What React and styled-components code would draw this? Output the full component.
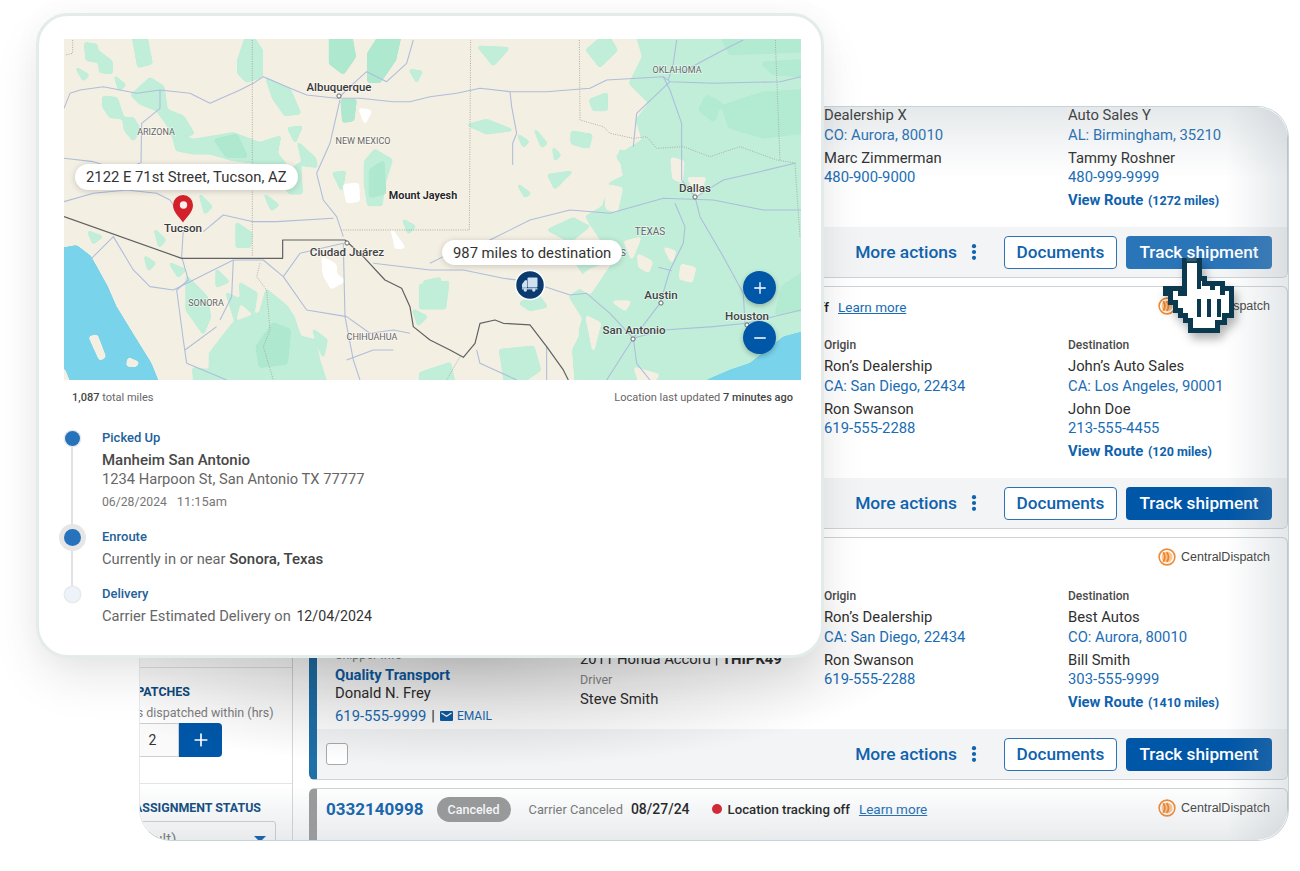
import React from 'react';
import styled, { createGlobalStyle } from 'styled-components';
import { Plus, Minus } from 'lucide-react';

const Global = createGlobalStyle`
  html, body { margin: 0; padding: 0; background: #fff; overflow: hidden; }
  * { box-sizing: border-box; }
  body { font-family: Roboto, "Liberation Sans", sans-serif; color: #2f2f2f; }
`;

const Stage = styled.div`
  position: relative;
  width: 1300px;
  height: 871px;
  padding: 106px 11px 30px 139px;
  overflow: hidden;
`;

const Panel = styled.section`
  position: relative;
  height: 100%;
  display: flex;
  border: 1px solid #c9d2d6;
  border-left-color: #e4e8ea;
  border-radius: 32px;
  overflow: hidden;
  background: #fff;
  &::after {
    content: '';
    position: absolute;
    inset: 0;
    pointer-events: none;
    border-radius: 32px;
    background:
      radial-gradient(ellipse 440px 110px at 330px 550px, rgba(0, 0, 0, 0.2), transparent 100%),
      linear-gradient(180deg, rgba(140, 155, 165, 0.22), transparent 70px),
      linear-gradient(0deg, rgba(140, 155, 165, 0.2), transparent 55px),
      linear-gradient(270deg, rgba(140, 155, 165, 0.24), transparent 60px);
  }
`;

const Sidebar = styled.aside`
  width: 153px;
  flex: none;
  padding-top: 560px;
  border-right: 1px solid #d4d7d9;
`;

const FilterSection = styled.div`
  height: ${(p) => p.$height}px;
  border-top: 1px solid #e2e4e6;
  padding: ${(p) => p.$pad}px 16px 0 0;
`;

const FilterTitle = styled.div`
  font-size: 12.4px;
  line-height: 16px;
  font-weight: 700;
  color: #0d4a80;
  white-space: nowrap;
  margin-left: ${(p) => p.$shift}px;
`;

const FilterHint = styled.div`
  font-size: 12.5px;
  line-height: 18px;
  color: #7f7f7f;
  white-space: nowrap;
  margin: 4px 0 1px -31px;
`;

const Stepper = styled.div`
  display: flex;
  height: 34px;
  margin-left: -14px;
`;

const StepValue = styled.div`
  width: 53px;
  border: 1px solid #cfcfcf;
  background: #fafafa;
  font-size: 14px;
  display: flex;
  align-items: center;
  justify-content: center;
  color: #333;
`;

const StepButton = styled.div`
  width: 43px;
  background: #0057a8;
  border-radius: 0 4px 4px 0;
  color: #fff;
  display: flex;
  align-items: center;
  justify-content: center;
`;

const FakeSelect = styled.div`
  height: 44px;
  margin: 5px 0 0 -23px;
  border: 1px solid #cfd2d4;
  border-radius: 3px;
  font-size: 15px;
  color: #777;
  padding: 8px 0 0 0;
  position: relative;
  white-space: nowrap;
  &::after {
    content: '';
    position: absolute;
    right: 9px;
    top: 14px;
    border-left: 6.5px solid transparent;
    border-right: 6.5px solid transparent;
    border-top: 6.5px solid #0057a8;
  }
`;

const CardColumn = styled.div`
  flex: 1;
  min-width: 0;
  margin: -72px 0 0 16px;
  display: flex;
  flex-direction: column;
  gap: 8px;
`;

const Card = styled.article`
  position: relative;
  height: 243px;
  flex: none;
  display: flex;
  flex-direction: column;
  background: #fff;
  border: 1px solid #cfd3d6;
  border-left: 8px solid ${(p) => p.$accent};
  border-radius: 6px;
`;

const CardHeader = styled.header`
  height: 43px;
  flex: none;
  display: flex;
  align-items: center;
  padding: 0 17px 3px 9px;
`;

const LoadId = styled.a`
  font-size: 17px;
  font-weight: 700;
  color: #0f62ae;
  margin-right: 13px;
`;

const StatusPill = styled.span`
  width: 74px;
  height: 25px;
  border-radius: 13px;
  background: #999;
  color: #fff;
  font-size: 12.5px;
  font-weight: 500;
  display: flex;
  align-items: center;
  justify-content: center;
  margin-right: 18px;
`;

const MetaLabel = styled.span`
  font-size: 12.8px;
  color: #777;
  margin-right: 8px;
`;

const MetaDate = styled.span`
  font-size: 14px;
  font-weight: 500;
  color: #1e1e1e;
  margin-right: 22px;
`;

const RedDot = styled.span`
  width: 10px;
  height: 10px;
  border-radius: 50%;
  background: #d9202c;
  margin-right: 6px;
`;

const TrackingNote = styled.span`
  font-size: 13.2px;
  font-weight: 500;
  color: #1e1e1e;
  white-space: nowrap;
  margin-right: 9px;
`;

const NoteSlot = styled.div`
  width: ${(p) => p.$width}px;
  display: flex;
  justify-content: flex-end;
`;

const LearnMore = styled.a`
  font-size: 13.5px;
  color: #1a6db5;
  text-decoration: underline;
  white-space: nowrap;
`;

const Brand = styled.div`
  margin: -2px 0 0 auto;
  display: flex;
  align-items: center;
  gap: 5px;
  font-family: "Liberation Sans", Arial, sans-serif;
  font-size: 12.5px;
  color: #444;
`;

const CardBody = styled.div`
  flex: 1;
  min-height: 0;
  display: grid;
  grid-template-columns: 245px 244px 244px 1fr;
  padding: 7px 0 0 18px;
`;

const Col = styled.div`
  padding-top: ${(p) => p.$top || 0}px;
  min-width: 0;
`;

const Caption = styled.div`
  font-size: 12px;
  line-height: 16px;
  font-weight: 500;
  color: #4a4a4a;
  margin-bottom: 3px;
`;

const MutedCaption = styled.div`
  font-size: 12.5px;
  line-height: 16px;
  color: #8a8a8a;
  margin: ${(p) => p.$gap || 0}px 0 ${(p) => p.$after || 0}px;
`;

const Line = styled.div`
  font-size: 14.8px;
  line-height: ${(p) => p.$lh || 20}px;
  color: #2f2f2f;
  white-space: nowrap;
`;

const LinkLine = styled(Line)`
  color: #1a6db5;
`;

const Contact = styled.div`
  margin-top: 4px;
`;

const Shipper = styled.div`
  font-size: 14.8px;
  line-height: 20px;
  font-weight: 700;
  color: #0f5ea8;
`;

const MailLink = styled.span`
  display: inline-flex;
  align-items: center;
  gap: 4px;
  font-size: 12px;
  color: #1a6db5;
  margin-left: 5px;
`;

const Pipe = styled.span`
  color: #333;
  margin-left: 5px;
`;

const Route = styled.div`
  font-size: 14.8px;
  line-height: 20px;
  font-weight: 700;
  color: #0f62ae;
  margin-top: 3px;
  white-space: nowrap;
  small {
    font-size: 12.5px;
    margin-left: 1px;
  }
`;

const CardFooter = styled.footer`
  height: 50px;
  flex: none;
  display: flex;
  align-items: center;
  padding: 0 15px 0 9px;
  background: #f3f4f5;
  border-radius: 0 0 5px 0;
`;

const Check = styled.span`
  width: 22px;
  height: 22px;
  border: 1.5px solid #a9a9a9;
  border-radius: 3px;
  background: #fff;
`;

const MoreActions = styled.a`
  margin-left: auto;
  display: flex;
  align-items: center;
  gap: 14px;
  font-size: 17.4px;
  font-weight: 500;
  color: #0f62ae;
  margin-right: 27px;
`;

const OutlineButton = styled.button`
  width: 113px;
  height: 33px;
  border: 1.5px solid #2c73b4;
  border-radius: 4px;
  background: #fff;
  color: #0f62ae;
  font: 500 17.2px Roboto, sans-serif;
  padding: 0;
  margin-right: 9px;
`;

const SolidButton = styled.button`
  width: 146px;
  height: 33px;
  border: 0;
  border-radius: 4px;
  background: ${(p) => (p.$hover ? '#2a74b8' : '#0057a8')};
  color: #fff;
  font: 500 17.2px Roboto, sans-serif;
  padding: 0;
`;

const FrontCard = styled.section`
  position: absolute;
  left: 36px;
  top: 13px;
  width: 788px;
  height: 645px;
  background: #fff;
  border: 3px solid #e4eceb;
  border-radius: 32px;
  padding: 23px 22px 0 25px;
  box-shadow: 0 22px 50px -4px rgba(0, 0, 0, 0.1), 0 0 30px rgba(0, 0, 0, 0.03);
`;

const MapBox = styled.div`
  position: relative;
  width: 737px;
  height: 341px;
  overflow: hidden;
  background: #f4efe3;
  svg.map {
    display: block;
  }
`;

const MapPill = styled.div`
  position: absolute;
  left: ${(p) => p.$x}px;
  top: ${(p) => p.$y}px;
  height: ${(p) => p.$h}px;
  padding: 0 11px;
  display: flex;
  align-items: center;
  background: #fff;
  border-radius: 14px;
  font-size: 14.8px;
  color: #333;
  white-space: nowrap;
  box-shadow: 0 1px 6px rgba(0, 0, 0, 0.18);
`;

const ZoomButton = styled.div`
  position: absolute;
  left: 679px;
  top: ${(p) => p.$y}px;
  width: 33px;
  height: 33px;
  border-radius: 50%;
  background: #0057a8;
  color: #fff;
  display: flex;
  align-items: center;
  justify-content: center;
  box-shadow: 0 2px 5px rgba(0, 0, 0, 0.25);
`;

const MapMeta = styled.div`
  display: flex;
  justify-content: space-between;
  padding: 11px 6px 0 8px;
  font-size: 11px;
  line-height: 14px;
  color: #666;
  b {
    font-weight: 500;
    color: #444;
  }
`;

const Timeline = styled.ol`
  list-style: none;
  margin: 25px 0 0 0;
  padding: 0;
  position: relative;
  &::before {
    content: '';
    position: absolute;
    left: 7px;
    top: 10px;
    bottom: 36px;
    width: 2px;
    background: #e0e2e3;
  }
`;

const Step = styled.li`
  position: relative;
  padding-left: 38px;
  height: ${(p) => p.$h}px;
`;

const StepDot = styled.span`
  position: absolute;
  left: ${(p) => (p.$big ? 0 : 1)}px;
  top: ${(p) => (p.$big ? 0 : 1)}px;
  width: ${(p) => (p.$big ? 17 : 15)}px;
  height: ${(p) => (p.$big ? 17 : 15)}px;
  border-radius: 50%;
  background: ${(p) => (p.$todo ? '#edf3f9' : '#2672bb')};
  box-shadow: 0 0 0 ${(p) => (p.$big ? 5 : 1.5)}px ${(p) => (p.$big ? '#e6e6e6' : '#e7e9ea')};
`;

const StepTitle = styled.div`
  font-size: 13px;
  line-height: 16px;
  font-weight: 500;
  color: #22619a;
  margin-bottom: ${(p) => p.$gap || 4}px;
`;

const Place = styled.div`
  font-size: 15px;
  line-height: 20px;
  font-weight: 500;
  color: #484848;
`;

const StepText = styled.div`
  font-size: 14.7px;
  line-height: 19px;
  color: #666;
  b {
    font-size: 15px;
    font-weight: 500;
    color: #444;
  }
  strong {
    font-size: 14.2px;
    font-weight: 400;
    color: #333;
    margin-left: 2px;
  }
`;

const StepTime = styled.div`
  font-size: 12.2px;
  line-height: 16px;
  color: #777;
  margin-top: 5px;
  span {
    margin-left: 10px;
    font-size: 12.8px;
  }
`;

const HandCursor = styled.svg`
  position: absolute;
  left: 1155px;
  top: 258px;
  filter: drop-shadow(3px 6px 5px rgba(0, 0, 0, 0.3));
`;

const greens5 = [
  '340,320 400,330 460,320 520,310 600,340 660,320 650,370 690,420 720,400 725,490 690,490 640,430 600,400 520,390 450,370 400,370 350,360',
  '215,195 270,145 310,170 320,240 370,260 400,310 345,330 320,280 290,240 240,220',
  '130,200 170,205 190,265 150,260 130,230',
  '190,265 220,265 240,300 220,330 195,300',
  '535,90 565,0 605,60 605,140 560,155 535,130',
  '215,0 255,0 275,100 235,110',
  '115,65 155,95 155,130 120,125',
  '75,40 110,45 115,95 80,90',
  '50,115 85,135 70,150',
  '620,145 690,180 720,250 675,255 640,205',
  '715,340 765,385 770,410 730,405',
  '685,295 725,290 705,335',
  '915,395 945,360 995,390 970,470 965,525 925,525 915,460',
  '450,970 520,880 600,850 620,780 680,830 700,860 720,920 760,930 780,1000 810,1090 450,1090',
  '380,740 440,800 450,860 430,910 380,840',
  '470,720 505,755 470,770',
  '530,580 575,610 570,650 530,650',
  '420,495 455,530 435,550',
  '540,760 590,790 580,850 545,820',
  '615,495 655,525 635,540',
  '1030,570 1065,590 1045,610',
  '500,790 540,810 525,870',
  '1060,840 1100,860 1075,885',
  '760,900 800,930 790,980',
  '820,430 855,425 845,480',
  '165,140 195,165 178,180',
  '330,700 375,720 355,740',
  '255,680 285,700 265,720',
  '285,600 315,630 298,650',
  '85,605 125,620 100,640',
  '400,1015 475,1025 475,1090 405,1090',
  '80,990 130,1000 100,1030',
  '1050,120 1085,125 1070,155',
  '1090,755 1140,745 1140,795',
];
const dark5 = [
  '810,0 870,0 885,80 850,130 810,100',
  '925,70 970,0 1025,0 1005,90 960,155 925,155',
  '845,210 887,210 880,270 850,275',
  '465,330 530,315 560,380 500,380',
  '930,420 970,395 975,490 930,500',
  '590,950 640,880 690,900 680,1000 600,1010',
];
const white5 = [
  '852,466 894,462 896,512 862,516',
  '900,238 932,243 915,278',
  '996,600 1032,652 1008,654',
  '788,684 826,704 828,734 852,752 815,774 792,735',
];
const water5 =
  '-30,660 50,646 92,678 142,768 168,828 223,918 273,998 310,1090 -30,1090';
const land5 = ['90,922 110,917 134,980 120,988', '206,986 234,998 226,1008 202,1006', '-30,1020 12,1020 40,1090 -30,1090'];

const greens6 = [
  '610,-20 1170,-20 1170,1090 440,1090 430,960 470,880 420,800 480,760 440,700 520,640 470,560 520,530 540,460 600,430 560,380 640,330 620,270 660,220 600,160 640,80',
  '145,50 235,55 190,105',
  '115,285 170,270 245,300 170,310',
  '265,315 295,335 280,350',
  '315,300 350,340 335,350',
  '425,305 485,315 475,355 425,340',
  '265,465 300,490 285,500',
  '355,435 425,425 375,475',
  '355,600 430,565 475,590 420,635',
  '-30,765 55,755 45,835 -30,835',
  '370,355 390,375 375,390',
  '470,60 530,10 560,60 510,110',
  '480,210 530,190 530,240 490,240',
  '480,800 530,810 560,860 600,880 600,1090 460,1090 450,900',
  '210,960 310,950 330,1020 230,1090',
  '-30,1030 60,1000 80,1090 -30,1090',
  '270,820 320,790 350,830 300,840',
  '570,360 610,400 580,430',
];
const beige6 = [
  '525,465 575,475 560,545 530,535',
  '725,385 760,395 755,455 730,445',
  '625,675 665,695 655,725 628,710',
  '705,655 735,665 725,695',
  '755,705 795,715 785,755 750,745',
  '550,815 600,815 585,840',
  '775,445 825,445 805,495',
  '430,760 480,720 540,700 480,790',
  '470,860 510,880 490,960',
  '425,375 475,355 455,400',
  '615,1015 685,1035 640,1090',
  '515,395 555,375 565,435',
  '585,635 630,625 605,685',
];
const dark6 = [
  '880,230 1000,190 1170,180 1170,300 1000,320 900,290',
  '1060,770 1170,700 1170,830 1040,850',
  '830,200 870,220 850,270 810,240',
  '1000,100 1170,90 1170,140 1030,130',
  '860,-20 1170,-20 1170,60 900,70',
];
const water6 = '830,1090 830,1050 900,1020 960,1000 1010,960 1060,920 1170,892 1170,1090';

const roads5 = [
  'M12,235 L30,190 L60,180 L130,170 L230,190 L300,180 L390,190 L450,220 L540,180 L580,160 L610,140 L680,170 L740,195 L830,205 L900,205 L1000,215 L1050,215 L1110,200',
  'M300,180 L300,235 L245,280 L243,400',
  'M12,515 L100,490 L200,480 L290,490 L330,510 L370,570',
  'M370,600 L365,680 L385,750 L350,780',
  'M430,605 L490,555 L580,575 L650,575 L820,565',
  'M12,385 L100,395 L180,420 L240,400',
  'M840,210 L810,340 L770,430 L790,510 L830,560 L850,620',
  'M1060,30 L1040,100 L980,155 L920,125 L870,170 L840,200',
  'M90,690 L160,620 L220,720 L270,770 L340,780 L400,750 L520,690 L610,690 L670,740 L720,670 L850,640',
  'M520,690 L515,800 L480,870',
  'M350,780 L370,930 L380,1000',
  'M375,960 L470,890',
  'M670,740 L740,840 L860,860 L930,910 L1000,900 L1050,910',
  'M850,640 L855,860 L880,990 L900,1050',
  'M380,1000 L500,1050',
  'M940,700 L1110,720',
  'M940,960 L1000,960 M860,990 L940,960',
];
const roads6 = [
  'M0,200 L80,190 L150,175 L240,185 L350,185 L480,175 L530,150 L700,140 L720,155 L850,160 L1050,155 L1113,140',
  'M240,185 L245,230 L260,310 L248,340 L248,405',
  'M700,140 L720,180 L755,280 L755,450 L795,500',
  'M720,155 L620,250 L610,350',
  'M940,30 L880,60 L750,130',
  'M740,30 L730,100 L715,150',
  'M0,720 L100,720 L220,745 L300,755 L420,795 L470,790 L540,850 L610,925 L700,900 L850,890 L950,880 L1113,840',
  'M180,630 L300,570 L420,540 L540,550 L700,505 L850,510 L1000,540 L1113,540',
  'M795,500 L810,560 L880,680 L940,790 L945,880',
  'M735,520 L765,590 L760,640 L720,720 L690,820 L610,925',
  'M610,925 L530,1050 M610,925 L620,1000 L660,1050',
  'M1095,400 L990,425 L880,450 L800,500',
  'M685,712 L725,722',
  'M0,700 L40,680 L180,630',
  'M140,960 L150,1000 L260,1050 M350,950 L350,1050',
];
const dotted5 = [
  'M577,30 L577,680',
  'M843,600 L1110,600',
  'M600,700 L590,740 L620,780 L630,900 L610,950 L640,1050',
  'M38,30 L38,70 L15,75',
];
const dotted6 = [
  'M0,600 L118,600 L122,30',
  'M448,30 L450,270 L520,290 L540,310 L610,325 L650,320 L680,355 L760,350 L840,380 L930,350 L1040,390 L1100,400',
  'M1036,30 L1050,390',
  'M1095,400 L1110,620',
  'M90,980 L50,1050',
];
const border5 = 'M12,560 L365,685 L668,685 L668,630 L855,630 L910,680 L975,750 L1025,775 L1050,830 L1060,890 L1110,930';
const border6 =
  'M0,930 L60,960 L100,982 L135,940 L150,880 L195,870 L220,880 L300,885 L350,950 L400,1020 L415,1050';

const labels = [
  ['Albuquerque', 339, 91, 11.4, 500, '#3a3a3a'],
  ['ARIZONA', 156, 134.5, 9, 400, '#666'],
  ['NEW MEXICO', 363, 143.5, 9, 400, '#666'],
  ['Mount Jayesh', 423, 198.5, 10.8, 600, '#222'],
  ['OKLAHOMA', 677, 72.5, 9, 400, '#666'],
  ['Dallas', 695, 192, 11.6, 500, '#444'],
  ['TEXAS', 650, 234.5, 10, 400, '#666'],
  ['Tucson', 183, 232, 11.6, 500, '#3a3a3a'],
  ['Ciudad Juárez', 347, 256, 11.6, 500, '#444'],
  ['SONORA', 206, 306, 9, 400, '#666'],
  ['CHIHUAHUA', 372, 339.5, 9, 400, '#666'],
  ['Austin', 661, 299, 11.6, 500, '#444'],
  ['San Antonio', 634, 334, 11.6, 500, '#444'],
  ['Houston', 747, 320, 11.6, 500, '#444'],
  ['S', 623, 255.5, 9.5, 400, '#666'],
];

const towns = [
  [339, 96],
  [695, 197],
  [661, 303],
  [633, 339],
  [347, 243],
  [747, 325],
];

function MapDrawing() {
  const poly = (list, fill, sw = 6) =>
    list.map((pts, i) => (
      <polygon key={i} points={pts} fill={fill} stroke={fill} strokeWidth={sw} strokeLinejoin="round" />
    ));
  const lines = (list, props) => list.map((d, i) => <path key={i} d={d} fill="none" strokeLinejoin="round" {...props} />);
  const road = { stroke: '#aebddb', strokeWidth: 3.2 };
  const dots = { stroke: '#a3a39c', strokeWidth: 2.6, strokeDasharray: '3 4' };
  const blob = 'url(#blob)';
  return (
    <svg className="map" width="737" height="341" viewBox="64 39 737 341">
      <defs>
        <filter
          id="blob"
          filterUnits="userSpaceOnUse"
          x="-120"
          y="-120"
          width="1500"
          height="1400"
          colorInterpolationFilters="sRGB"
        >
          <feGaussianBlur stdDeviation="5" />
          <feColorMatrix values="1 0 0 0 0 0 1 0 0 0 0 0 1 0 0 0 0 0 6 -2" />
        </filter>
      </defs>
      <rect x="64" y="39" width="737" height="341" fill="#f4efe3" />
      <g transform="translate(60 30) scale(.3333)">
        <g filter={blob}>{poly(greens5, '#c0eed9')}</g>
        <g filter={blob}>{poly(dark5, '#aee8cf')}</g>
        <g filter={blob}>{poly(white5, '#fff')}</g>
      </g>
      <g transform="translate(430 30) scale(.3333)">
        <g filter={blob}>{poly(greens6, '#c0eed9')}</g>
        <g filter={blob}>{poly(dark6, '#b3ead2', 10)}</g>
        <g filter={blob}>{poly(beige6, '#f4efe3')}</g>
      </g>
      <g transform="translate(60 30) scale(.3333)">
        <g filter={blob}><polygon points={water5} fill="#79d3ea" /></g>
        <g filter={blob}>{poly(land5, '#f4efe3')}</g>
        {lines(dotted5, dots)}
        {lines(roads5, road)}
        <path d={border5} fill="none" stroke="#5f6163" strokeWidth="3.6" strokeLinejoin="round" />
      </g>
      <g transform="translate(430 30) scale(.3333)">
        <g filter={blob}><polygon points={water6} fill="#79d3ea" /></g>
        {lines(dotted6, dots)}
        {lines(roads6, road)}
        <path d={border6} fill="none" stroke="#5f6163" strokeWidth="3.6" strokeLinejoin="round" />
      </g>
      {towns.map(([x, y]) => (
        <circle key={x} cx={x} cy={y} r="2.1" fill="#fff" stroke="#666" strokeWidth="1" />
      ))}
      {labels.map(([t, x, y, s, w, c]) => (
        <text
          key={t}
          x={x}
          y={y}
          textAnchor="middle"
          fontFamily="Roboto, sans-serif"
          fontSize={s}
          fontWeight={w}
          fill={c}
          stroke="rgba(255,255,255,.55)"
          strokeWidth="1.6"
          style={{ paintOrder: 'stroke' }}
        >
          {t}
        </text>
      ))}
      <path
        d="M183 222.5c-2-4-10-9.500-10-17.500a10 10 0 0 1 20 0c0 8-8 13.500-10 17.500z"
        fill="#d3202b"
      />
      <circle cx="183.500" cy="205" r="3.700" fill="#fbeeee" />
      <g transform="translate(530 285)">
        <circle r="14.500" fill="#0a3a6e" stroke="#fff" strokeWidth="1.500" />
        <rect x="-2.500" y="-7.500" width="10" height="10" rx="1" fill="#cfe0ef" />
        <path d="M-8 2.800v-3.500l3-4h2v7.500z" fill="#cfe0ef" />
        <rect x="-8" y="3.200" width="15.500" height="1.200" fill="#cfe0ef" />
        <circle cx="-4.700" cy="5" r="1.700" fill="#cfe0ef" />
        <circle cx="3.800" cy="5" r="1.700" fill="#cfe0ef" />
      </g>
    </svg>
  );
}

const LogoMark = () => (
  <svg width="18" height="18" viewBox="0 0 19 19">
    <circle cx="9.500" cy="9.500" r="8.300" fill="#fff" stroke="#f08a35" strokeWidth="1.700" />
    <circle cx="9.500" cy="9.500" r="5.800" fill="#fbc596" />
    <path d="M5.500 4.500Q9 9.500 5.500 14.500M9.200 4.500Q13 9.500 9.200 14.500" fill="none" stroke="#ee8428" strokeWidth="1.900" />
  </svg>
);

const KebabIcon = () => (
  <svg width="6" height="16" viewBox="0 0 6 16" fill="#0f62ae">
    <circle cx="3" cy="2.200" r="2.100" />
    <circle cx="3" cy="8" r="2.100" />
    <circle cx="3" cy="13.800" r="2.100" />
  </svg>
);

const MailIcon = () => (
  <svg width="13" height="10" viewBox="0 0 13 10">
    <rect width="13" height="10" rx="1" fill="#0f5ea8" />
    <path d="M1.500 2l5 3.200 5-3.200" fill="none" stroke="#fff" strokeWidth="1.300" />
  </svg>
);

const Hand = () => (
  <HandCursor width="85" height="85" viewBox="0 0 255 255">
    <path
      d="M88 8H132V62H147V77H177V77H202V92H228V172H208V192H188V217H107V187H92V172H77V157H62V132H47V107H32V92H77V107H88Z"
      fill="#fff"
      stroke="#0b3a50"
      strokeWidth="15"
      strokeLinejoin="miter"
      shapeRendering="crispEdges"
    />
    <path
      d="M132 122V178M162 122V178M192 122V178M132 62V92M172 77V97M202 92V112"
      stroke="#0b3a50"
      strokeWidth="14"
      shapeRendering="crispEdges"
    />
    <rect x="95" y="0" width="30" height="10" fill="#3d6880" opacity=".7" />
  </HandCursor>
);

function Places({ o, d }) {
  return (
    <>
      <Col>
        <Caption>Origin</Caption>
        <Line>{o[0]}</Line>
        <LinkLine>{o[1]}</LinkLine>
        <Contact>
          <Line $lh={19}>{o[2]}</Line>
          <LinkLine $lh={19}>{o[3]}</LinkLine>
        </Contact>
      </Col>
      <Col>
        <Caption>Destination</Caption>
        <Line>{d[0]}</Line>
        <LinkLine>{d[1]}</LinkLine>
        <Contact>
          <Line $lh={19}>{d[2]}</Line>
          <LinkLine $lh={19}>{d[3]}</LinkLine>
        </Contact>
        <Route>
          View Route <small>({d[4]} miles)</small>
        </Route>
      </Col>
    </>
  );
}

function Actions({ hover, check }) {
  return (
    <CardFooter>
      {check && <Check />}
      <MoreActions>
        More actions <KebabIcon />
      </MoreActions>
      <OutlineButton>Documents</OutlineButton>
      <SolidButton $hover={hover}>Track shipment</SolidButton>
    </CardFooter>
  );
}

const BrandMark = () => (
  <Brand>
    <LogoMark />
    CentralDispatch
  </Brand>
);

export default function App() {
  return (
    <Stage>
      <Global />
      <Panel>
        <Sidebar>
          <FilterSection $height={116} $pad={16}>
            <FilterTitle $shift={-23}>DISPATCHES</FilterTitle>
            <FilterHint>Loads dispatched within (hrs)</FilterHint>
            <Stepper>
              <StepValue>2</StepValue>
              <StepButton>
                <Plus size={20} strokeWidth={2} />
              </StepButton>
            </Stepper>
          </FilterSection>
          <FilterSection $height={70} $pad={16}>
            <FilterTitle $shift={-6}>ASSIGNMENT STATUS</FilterTitle>
            <FakeSelect>(Default)</FakeSelect>
          </FilterSection>
        </Sidebar>
        <CardColumn>
          <Card $accent="#1f6fa8">
            <CardHeader />
            <CardBody>
              <Col />
              <Col />
              <Places
                o={['Dealership X', 'CO: Aurora, 80010', 'Marc Zimmerman', '480-900-9000']}
                d={['Auto Sales Y', 'AL: Birmingham, 35210', 'Tammy Roshner', '480-999-9999', 1272]}
              />
            </CardBody>
            <Actions hover />
          </Card>
          <Card $accent="#1f6fa8">
            <CardHeader>
              <NoteSlot $width={512}>
                <TrackingNote>Location tracking off</TrackingNote>
              </NoteSlot>
              <LearnMore>Learn more</LearnMore>
              <BrandMark />
            </CardHeader>
            <CardBody>
              <Col />
              <Col />
              <Places
                o={['Ron’s Dealership', 'CA: San Diego, 22434', 'Ron Swanson', '619-555-2288']}
                d={['John’s Auto Sales', 'CA: Los Angeles, 90001', 'John Doe', '213-555-4455', 120]}
              />
            </CardBody>
            <Actions />
          </Card>
          <Card $accent="#1f6fa8">
            <CardHeader>
              <BrandMark />
            </CardHeader>
            <CardBody>
              <Col $top={59}>
                <MutedCaption $after={2}>Shipper Info</MutedCaption>
                <Shipper>Quality Transport</Shipper>
                <Line $lh={16}>Donald N. Frey</Line>
                <LinkLine $lh={30}>
                  619-555-9999
                  <Pipe>|</Pipe>
                  <MailLink>
                    <MailIcon />
                    EMAIL
                  </MailLink>
                </LinkLine>
              </Col>
              <Col $top={61}>
                <Line>2011 Honda Accord | <b>THIPK49</b></Line>
                <MutedCaption $gap={3} $after={1}>Driver</MutedCaption>
                <Line>Steve Smith</Line>
              </Col>
              <Places
                o={['Ron’s Dealership', 'CA: San Diego, 22434', 'Ron Swanson', '619-555-2288']}
                d={['Best Autos', 'CO: Aurora, 80010', 'Bill Smith', '303-555-9999', 1410]}
              />
            </CardBody>
            <Actions check />
          </Card>
          <Card $accent="#9b9b9b">
            <CardHeader>
              <LoadId>0332140998</LoadId>
              <StatusPill>Canceled</StatusPill>
              <MetaLabel>Carrier Canceled</MetaLabel>
              <MetaDate>08/27/24</MetaDate>
              <RedDot />
              <TrackingNote>Location tracking off</TrackingNote>
              <LearnMore>Learn more</LearnMore>
              <BrandMark />
            </CardHeader>
            <CardBody>
              <Col />
              <Col>
                <Caption>Vehicle</Caption>
              </Col>
              <Col>
                <Caption>Origin</Caption>
              </Col>
              <Col>
                <Caption>Destination</Caption>
              </Col>
            </CardBody>
          </Card>
        </CardColumn>
      </Panel>
      <FrontCard>
        <MapBox>
          <MapDrawing />
          <MapPill $x={11} $y={125} $h={26}>2122 E 71st Street, Tucson, AZ</MapPill>
          <MapPill $x={378} $y={201} $h={25}>987 miles to destination</MapPill>
          <ZoomButton $y={232}>
            <Plus size={18} strokeWidth={1.8} />
          </ZoomButton>
          <ZoomButton $y={282}>
            <Minus size={18} strokeWidth={1.8} />
          </ZoomButton>
        </MapBox>
        <MapMeta>
          <span><b>1,087</b> total miles</span>
          <span>Location last updated <b>7 minutes ago</b></span>
        </MapMeta>
        <Timeline>
          <Step $h={99}>
            <StepDot />
            <StepTitle>Picked Up</StepTitle>
            <Place>Manheim San Antonio</Place>
            <StepText>1234 Harpoon St, San Antonio TX 77777</StepText>
            <StepTime>06/28/2024<span>11:15am</span></StepTime>
          </Step>
          <Step $h={57}>
            <StepDot $big />
            <StepTitle $gap={5}>Enroute</StepTitle>
            <StepText>Currently in or near <b>Sonora, Texas</b></StepText>
          </Step>
          <Step $h={50}>
            <StepDot $todo />
            <StepTitle $gap={5}>Delivery</StepTitle>
            <StepText>Carrier Estimated Delivery on <strong>12/04/2024</strong></StepText>
          </Step>
        </Timeline>
      </FrontCard>
      <Hand />
    </Stage>
  );
}
